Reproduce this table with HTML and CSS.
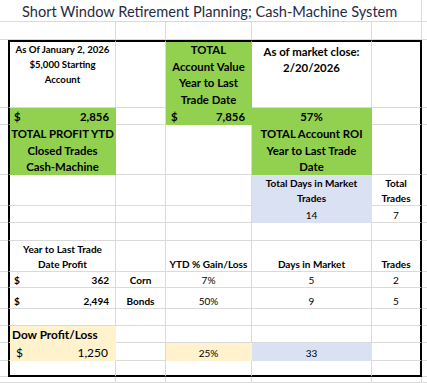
FILE: index.html
```html
<!DOCTYPE html>
<html lang="en">
<head>
<meta charset="utf-8">
<title>Short Window Retirement Planning</title>
<link rel="stylesheet" href="styles.css">
</head>
<body>
<div class="sheet">
  <!-- row 1: title -->
  <div class="c p"></div>
  <div class="c title">Short Window Retirement Planning; Cash-Machine System</div>
  <div class="c q"></div>

  <!-- row 2: blank -->
  <div class="c p"></div>
  <div class="c"></div><div class="c"></div><div class="c"></div><div class="c"></div><div class="c"></div>
  <div class="c q"></div>

  <!-- row 3: headers -->
  <div class="c p"></div>
  <div class="c fl ft top sm hdr-a">As Of January 2, 2026<br>$5,000 Starting<br>Account</div>
  <div class="c ft"></div>
  <div class="c ft green top lbl hdr-c">TOTAL<br>Account Value<br>Year to Last<br>Trade Date</div>
  <div class="c ft top lbl hdr-d">As of market close:<br>2/20/2026</div>
  <div class="c ft fr"></div>
  <div class="c q"></div>

  <!-- row 4: values -->
  <div class="c p"></div>
  <div class="c fl green lbl acct acct-a"><span>$</span><span>2,856</span></div>
  <div class="c"></div>
  <div class="c green lbl acct acct-c"><span>$</span><span>7,856</span></div>
  <div class="c green lbl">57%</div>
  <div class="c fr"></div>
  <div class="c q"></div>

  <!-- row 5: labels -->
  <div class="c p"></div>
  <div class="c fl green top lbl three">TOTAL PROFIT YTD<br>Closed Trades<br>Cash-Machine</div>
  <div class="c"></div>
  <div class="c"></div>
  <div class="c green top lbl three">TOTAL Account ROI<br>Year to Last Trade<br>Date</div>
  <div class="c fr"></div>
  <div class="c q"></div>

  <!-- row 6 -->
  <div class="c p"></div>
  <div class="c fl"></div>
  <div class="c"></div>
  <div class="c"></div>
  <div class="c blue top sm two">Total Days in Market<br>Trades</div>
  <div class="c fr top sm two">Total<br>Trades</div>
  <div class="c q"></div>

  <!-- row 7 -->
  <div class="c p"></div>
  <div class="c fl"></div>
  <div class="c"></div>
  <div class="c"></div>
  <div class="c blue num">14</div>
  <div class="c fr num">7</div>
  <div class="c q"></div>

  <!-- row 8 -->
  <div class="c p"></div>
  <div class="c fl"></div><div class="c"></div><div class="c"></div><div class="c"></div>
  <div class="c fr"></div>
  <div class="c q"></div>

  <!-- row 9: table header -->
  <div class="c p"></div>
  <div class="c fl top sm two">Year to Last Trade<br>Date Profit</div>
  <div class="c"></div>
  <div class="c sm low">YTD % Gain/Loss</div>
  <div class="c sm low">Days in Market</div>
  <div class="c fr sm low">Trades</div>
  <div class="c q"></div>

  <!-- row 10: corn -->
  <div class="c p"></div>
  <div class="c fl sm acct acct-r"><span>$</span><span>362</span></div>
  <div class="c sm low">Corn</div>
  <div class="c num low">7%</div>
  <div class="c num low">5</div>
  <div class="c fr num low">2</div>
  <div class="c q"></div>

  <!-- row 11: bonds -->
  <div class="c p"></div>
  <div class="c fl sm acct acct-r"><span>$</span><span>2,494</span></div>
  <div class="c sm low">Bonds</div>
  <div class="c num low">50%</div>
  <div class="c num low">9</div>
  <div class="c fr num low">5</div>
  <div class="c q"></div>

  <!-- row 12 -->
  <div class="c p"></div>
  <div class="c fl"></div><div class="c"></div><div class="c"></div><div class="c"></div>
  <div class="c fr"></div>
  <div class="c q"></div>

  <!-- row 13: dow -->
  <div class="c p"></div>
  <div class="c fl peach dow">Dow Profit/Loss</div>
  <div class="c"></div><div class="c"></div><div class="c"></div>
  <div class="c fr"></div>
  <div class="c q"></div>

  <!-- row 14: dow values -->
  <div class="c p"></div>
  <div class="c fl peach big acct acct-d"><span>$</span><span>1,250</span></div>
  <div class="c"></div>
  <div class="c peach num">25%</div>
  <div class="c blue num">33</div>
  <div class="c fr"></div>
  <div class="c q"></div>

  <!-- row 15 -->
  <div class="c p"></div>
  <div class="c fl fb"></div><div class="c fb"></div><div class="c fb"></div><div class="c fb"></div>
  <div class="c fr fb"></div>
  <div class="c q"></div>

  <!-- row 16 -->
  <div class="c p"></div>
  <div class="c"></div><div class="c"></div><div class="c"></div><div class="c"></div><div class="c"></div>
  <div class="c q"></div>
</div>
</body>
</html>
```

FILE: styles.css
```css
html, body {
  margin: 0;
  padding: 0;
  background: #ffffff;
}

body {
  font-family: Lato, "Open Sans", "Liberation Sans", sans-serif;
  color: #000000;
  width: 427px;
  height: 383px;
  overflow: hidden;
}

.sheet {
  display: grid;
  grid-template-columns: 8px 108px 50px 86px 120px 50px 5px;
  grid-template-rows: 22px 18px 68px 17px 50px 31px 17px 18px 31px 16px 21px 17px 17px 18px 16px 6px;
}

.c {
  box-sizing: border-box;
  border-right: 1px solid #dadada;
  border-bottom: 1px solid #dadada;
  display: flex;
  align-items: flex-end;
  justify-content: center;
  text-align: center;
  white-space: nowrap;
  line-height: 14px;
}

.p, .q {
  border-right: none;
}

/* thick outline frame */
.fl { border-left: 2px solid #000000; }
.fr { border-right: 2px solid #000000; }
.ft { border-top: 2px solid #000000; }
.fb { border-bottom: 2px solid #000000; }

/* fills */
.green { background: #92d050; border-right-color: transparent; border-bottom-color: transparent; }
.blue { background: #d9e1f2; border-right-color: transparent; border-bottom-color: transparent; }
.peach { background: #fff2cc; border-right-color: transparent; border-bottom-color: transparent; }
.fl.green, .fl.peach { border-left-color: #000000; }
.ft.green { border-top-color: #000000; }

/* text styles */
.title {
  grid-column: span 5;
  justify-content: flex-start;
  padding-left: 14px;
  font-size: 14.6px;
  line-height: 18px;
  color: #1f2b45;
}

.lbl {
  font-weight: 700;
  font-size: 11.4px;
}

.sm {
  font-weight: 700;
  font-size: 10px;
}

.num {
  font-size: 10px;
  line-height: 13px;
}

.low {
  line-height: 13px;
}

.top {
  align-items: flex-start;
}

.hdr-a {
  font-size: 9.6px;
  line-height: 14.75px;
  padding-top: 1px;
}

.hdr-c {
  line-height: 16.6px;
}

.hdr-d {
  line-height: 16px;
  padding-top: 2px;
}

.three {
  line-height: 16.6px;
  padding-top: 1px;
}

.two {
  line-height: 15.3px;
  padding-top: 1px;
}

.acct {
  justify-content: space-between;
}

.acct-a {
  padding: 0 6px 0 4px;
  line-height: 15px;
}

.acct-c {
  padding: 0 6px 0 5px;
  line-height: 15px;
}

.acct-r {
  padding: 0 6px 0 4px;
  line-height: 13px;
}

.acct-d {
  padding: 0 7px 0 6px;
}

.dow {
  justify-content: flex-start;
  padding-left: 2px;
  font-weight: 700;
  font-size: 11.8px;
  line-height: 15px;
}

.big {
  font-size: 12px;
  line-height: 15px;
}
```
